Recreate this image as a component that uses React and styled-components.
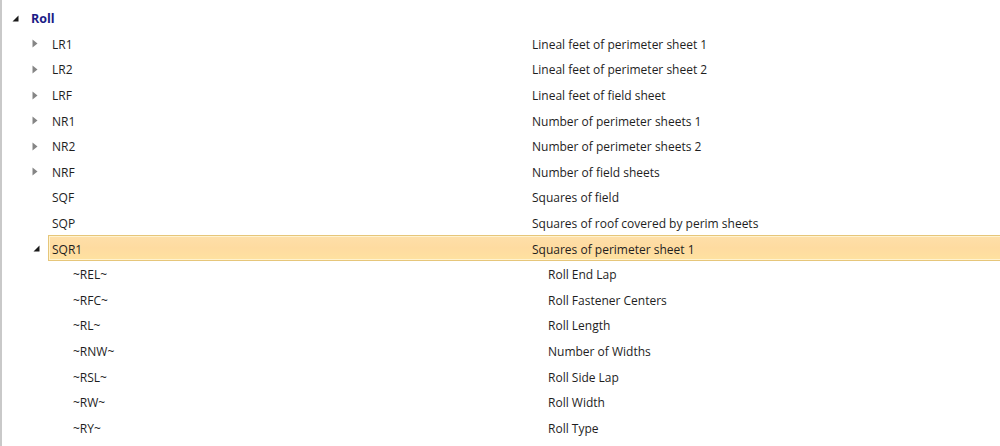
import React from "react";
import styled, { createGlobalStyle } from "styled-components";

const GlobalStyle = createGlobalStyle`
  html, body {
    margin: 0;
    padding: 0;
    background: #ffffff;
  }
  body {
    font-family: "Open Sans", "Noto Sans", sans-serif;
    font-size: 12px;
    color: #1e1e1e;
  }
`;

const Tree = styled.div`
  width: 1000px;
  height: 446px;
  box-sizing: border-box;
  border-left: 2px solid #c9c9c9;
  padding-top: 5px;
  overflow: hidden;
`;

const Row = styled.div`
  display: flex;
  height: 25.6px;
  padding-left: ${p => 6 + p.$level * 21}px;
`;

const Expander = styled.div`
  width: 19px;
  flex: none;
  display: flex;
  align-items: center;
  padding-left: ${p => (p.$open ? 4 : 3)}px;
  padding-top: 1px;
  box-sizing: border-box;
`;

const Content = styled.div`
  flex: 1;
  margin-right: -3px;
  padding-top: 2px;
  display: grid;
  grid-template-columns: ${p => p.$nameWidth}px 1fr;
  align-items: center;
  box-sizing: border-box;
  border: 1px solid ${p => (p.$selected ? "#e6c67a" : "transparent")};
  box-shadow: ${p => (p.$selected ? "inset 0 0 0 1px #fff3cf" : "none")};
  background: ${p =>
    p.$selected ? "linear-gradient(#fedfa9, #fedba0 50%, #fee2a0)" : "transparent"};
`;

const Name = styled.span`
  padding-left: 3px;
  white-space: nowrap;
  font-weight: ${p => (p.$root ? 700 : 400)};
  font-size: ${p => (p.$root ? "12.5px" : "12px")};
  color: ${p => (p.$root ? "#1b1b86" : "#1e1e1e")};
`;

const Desc = styled.span`
  white-space: nowrap;
`;

const Collapsed = () => (
  <svg width="6" height="9" viewBox="0 0 6 9">
    <path d="M0.5 0.5 L5.5 4.5 L0.5 8.5 Z" fill="#858585" />
  </svg>
);

const Opened = () => (
  <svg width="7" height="7" viewBox="0 0 7 7">
    <path d="M6.5 0.5 L6.5 6.5 L0.5 6.5 Z" fill="#1a1a1a" />
  </svg>
);

const rows = [
  { level: 0, name: "Roll", desc: "", state: "open", root: true },
  { level: 1, name: "LR1", desc: "Lineal feet of perimeter sheet 1", state: "closed" },
  { level: 1, name: "LR2", desc: "Lineal feet of perimeter sheet 2", state: "closed" },
  { level: 1, name: "LRF", desc: "Lineal feet of field sheet", state: "closed" },
  { level: 1, name: "NR1", desc: "Number of perimeter sheets 1", state: "closed" },
  { level: 1, name: "NR2", desc: "Number of perimeter sheets 2", state: "closed" },
  { level: 1, name: "NRF", desc: "Number of field sheets", state: "closed" },
  { level: 1, name: "SQF", desc: "Squares of field" },
  { level: 1, name: "SQP", desc: "Squares of roof covered by perim sheets" },
  { level: 1, name: "SQR1", desc: "Squares of perimeter sheet 1", state: "open", selected: true },
  { level: 2, name: "~REL~", desc: "Roll End Lap" },
  { level: 2, name: "~RFC~", desc: "Roll Fastener Centers" },
  { level: 2, name: "~RL~", desc: "Roll Length" },
  { level: 2, name: "~RNW~", desc: "Number of Widths" },
  { level: 2, name: "~RSL~", desc: "Roll Side Lap" },
  { level: 2, name: "~RW~", desc: "Roll Width" },
  { level: 2, name: "~RY~", desc: "Roll Type" },
];

// the description column sits at a fixed x, shifted for the deepest level
const descX = level => (level < 2 ? 532 : 548);

const App = () => {
  return (
    <>
      <GlobalStyle />
      <Tree>
        {rows.map(r => {
          const contentStart = 27 + r.level * 21;
          return (
            <Row key={r.name} $level={r.level}>
              <Expander $open={r.state === "open"}>
                {r.state === "open" && <Opened />}
                {r.state === "closed" && <Collapsed />}
              </Expander>
              <Content $selected={r.selected} $nameWidth={descX(r.level) - contentStart - 1}>
                <Name $root={r.root}>{r.name}</Name>
                <Desc>{r.desc}</Desc>
              </Content>
            </Row>
          );
        })}
      </Tree>
    </>
  );
};

export default App;
